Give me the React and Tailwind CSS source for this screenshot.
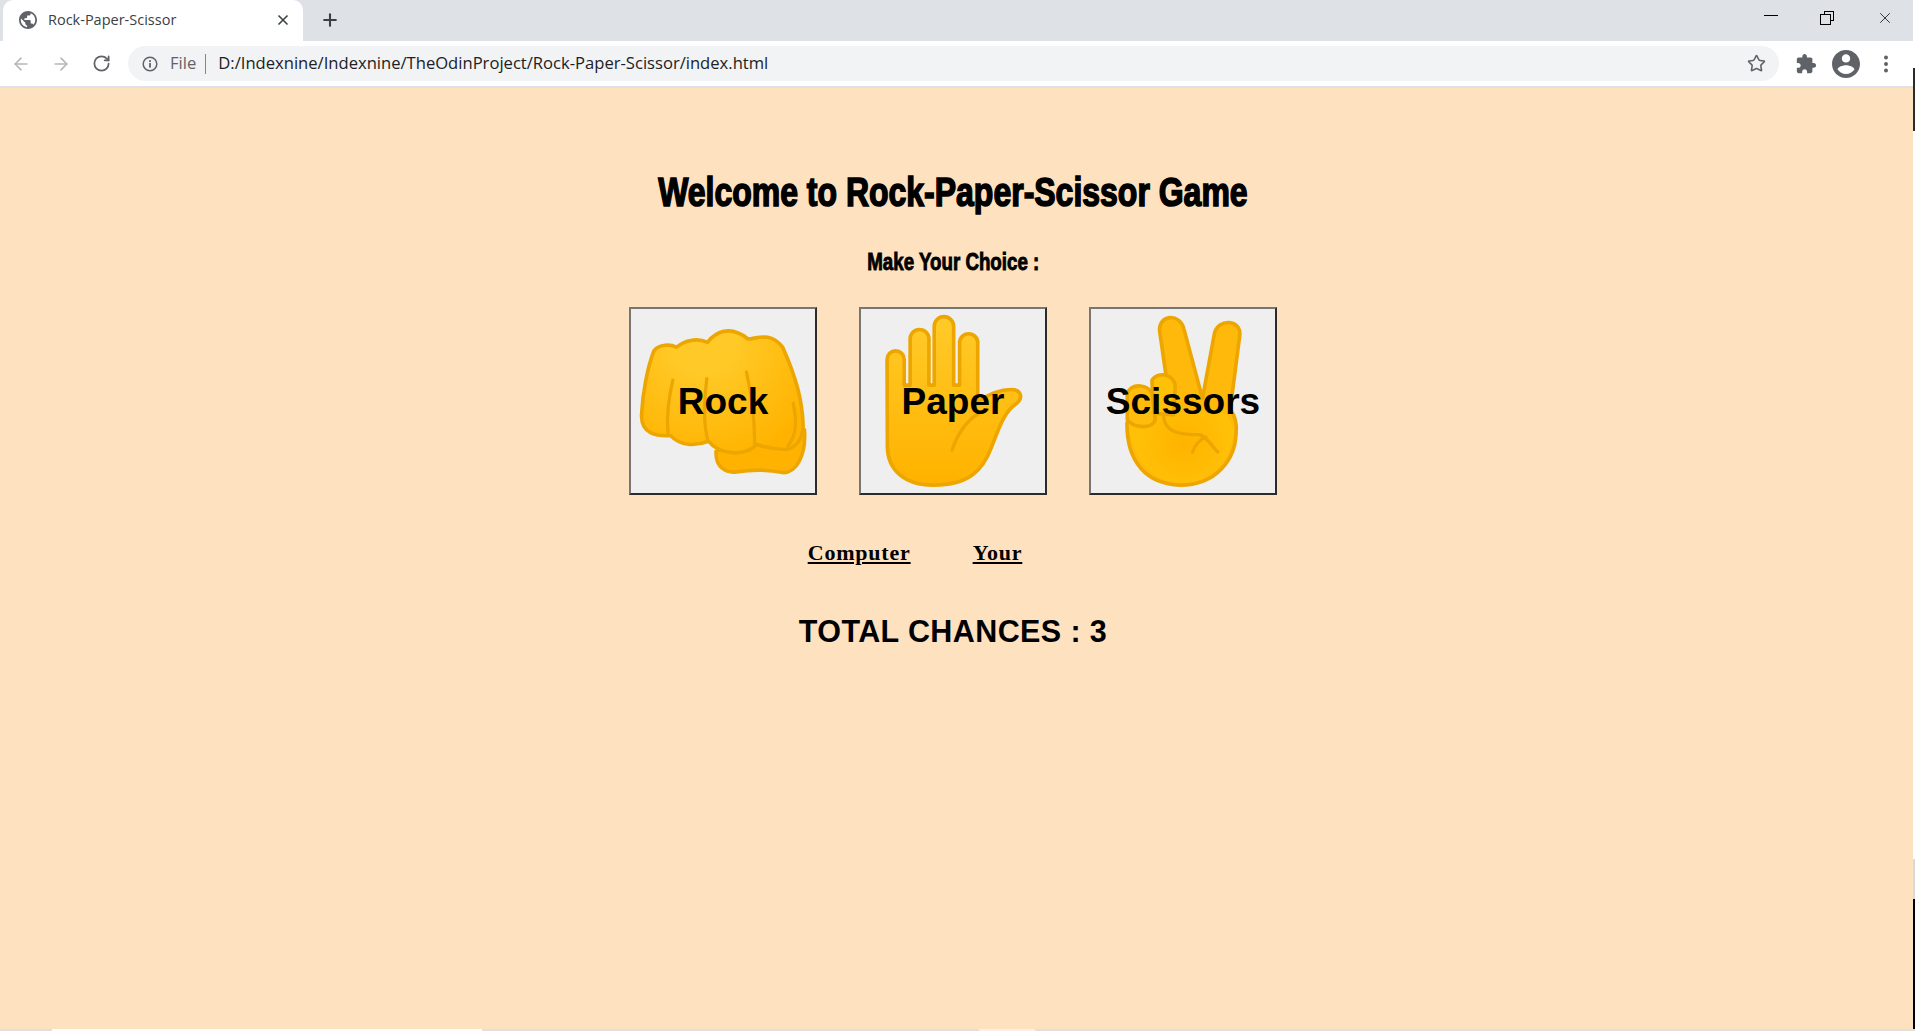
import React from "react";
import { ArrowLeft, ArrowRight, RotateCw, Star, Plus, X } from "lucide-react";

const Globe = () => (
  <svg viewBox="2 2 20 20" className="w-[18px] h-[18px] shrink-0" fill="#5f6368">
    <path d="M12 2C6.48 2 2 6.48 2 12s4.48 10 10 10 10-4.48 10-10S17.52 2 12 2zm-1 17.93c-3.95-.49-7-3.85-7-7.93 0-.62.08-1.21.21-1.79L9 15v1c0 1.1.9 2 2 2v1.93zm6.9-2.54c-.26-.81-1-1.39-1.9-1.39h-1v-3c0-.55-.45-1-1-1H8v-2h2c.55 0 1-.45 1-1V7h2c1.1 0 2-.9 2-2v-.41c2.93 1.19 5 4.06 5 7.41 0 2.08-.8 3.97-2.1 5.39z" />
  </svg>
);

const InfoIcon = () => (
  <svg viewBox="0 0 16 16" className="w-4 h-4 shrink-0" fill="none" stroke="#5f6368">
    <circle cx="8" cy="8" r="6.8" strokeWidth="1.5" />
    <rect x="7.1" y="7" width="1.8" height="4.6" fill="#5f6368" stroke="none" />
    <rect x="7.1" y="4.2" width="1.8" height="1.8" fill="#5f6368" stroke="none" />
  </svg>
);

const Puzzle = () => (
  <svg viewBox="0 0 24 24" className="w-[22px] h-[22px]" fill="#5f6368">
    <path d="M20.5 11H19V7c0-1.1-.9-2-2-2h-4V3.5C13 2.12 11.88 1 10.5 1S8 2.12 8 3.5V5H4c-1.1 0-1.99.9-1.99 2v3.8H3.5c1.49 0 2.7 1.21 2.7 2.7s-1.21 2.7-2.7 2.7H2V20c0 1.1.9 2 2 2h3.8v-1.5c0-1.49 1.21-2.7 2.7-2.7 1.49 0 2.7 1.21 2.7 2.7V22H17c1.1 0 2-.9 2-2v-4h1.5c1.38 0 2.5-1.12 2.5-2.5S21.88 11 20.5 11z" />
  </svg>
);

const Avatar = () => (
  <svg viewBox="2 2 20 20" className="w-7 h-7" fill="#5f6368">
    <path d="M12 2C6.48 2 2 6.48 2 12s4.48 10 10 10 10-4.48 10-10S17.52 2 12 2zm0 3c1.66 0 3 1.34 3 3s-1.34 3-3 3-3-1.34-3-3 1.34-3 3-3zm0 14.2c-2.5 0-4.71-1.28-6-3.22.03-1.99 4-3.08 6-3.08 1.99 0 5.97 1.09 6 3.08-1.29 1.94-3.5 3.22-6 3.22z" />
  </svg>
);

const Dots = () => (
  <svg viewBox="0 0 6 20" className="w-[6px] h-5" fill="#5f6368">
    <circle cx="3" cy="3.5" r="2" />
    <circle cx="3" cy="10" r="2" />
    <circle cx="3" cy="16.5" r="2" />
  </svg>
);

const Gradient = ({ id }) => (
  <defs>
    <radialGradient id={id} gradientUnits="userSpaceOnUse" cx="250" cy="120" r="440">
      <stop offset="0.2" stopColor="#ffca28" />
      <stop offset="0.85" stopColor="#ffb300" />
    </radialGradient>
  </defs>
);

const line = { fill: "none", stroke: "#eda600", strokeWidth: 10, strokeLinecap: "round", strokeLinejoin: "round" };
const outline = { stroke: "#eda600", strokeWidth: 11, strokeLinejoin: "round" };

const RockArt = () => (
  <svg viewBox="30 24 558 558" className="absolute inset-0 w-full h-full">
    <Gradient id="rockG" />
    <path d="M288,455 C285,505 320,522 350,518 C400,510 450,512 490,520 C530,522 562,470 556,390 L530,380 Z" fill="#ffb300" {...outline} />
    <path d="M100,150 C115,130 150,130 168,140 C190,120 230,110 262,125 C285,95 330,70 385,115 C410,115 450,90 490,140 C530,230 550,300 552,380 C550,420 530,445 500,450 C470,450 440,445 410,435 C380,470 300,470 265,425 C225,440 180,440 150,408 C110,410 60,405 62,345 C65,280 80,200 100,150 Z" fill="url(#rockG)" {...outline} />
    <path d="M157,240 C145,290 138,350 142,400" {...line} />
    <path d="M260,235 C252,300 250,370 262,420" {...line} />
    <path d="M380,215 C395,280 405,360 405,432" {...line} />
    <path d="M522,310 C532,360 535,405 505,440" {...line} />
  </svg>
);

const PaperArt = () => (
  <svg viewBox="30 24 558 558" className="absolute inset-0 w-full h-full">
    <defs>
      <linearGradient id="paperG" gradientUnits="userSpaceOnUse" x1="0" y1="60" x2="0" y2="540">
        <stop offset="0" stopColor="#ffca28" />
        <stop offset="1" stopColor="#ffb300" />
      </linearGradient>
    </defs>
    <path d="M109,177 A26,26 0 0 1 161,177 L161,255 L179,255 L179,114.5 A28.5,28.5 0 0 1 236,114.5 L236,255 L252,255 L252,76.5 A29.5,29.5 0 0 1 311,76.5 L311,255 L329,255 L329,126.5 A27.5,27.5 0 0 1 384,126.5 L384,305 C420,280 450,268 485,268 C518,268 522,296 500,312 C465,335 450,380 425,445 C400,510 360,558 250,558 C160,558 110,510 110,440 Z" fill="url(#paperG)" {...outline} />
    <path d="M306,452 C322,405 345,365 388,340" {...line} />
  </svg>
);

const ScissorsArt = () => (
  <svg viewBox="30 24 558 558" className="absolute inset-0 w-full h-full">
    <defs>
      <radialGradient id="sciG" gradientUnits="userSpaceOnUse" cx="310" cy="430" r="150">
        <stop offset="0" stopColor="#ffb300" />
        <stop offset="1" stopColor="#ffc107" />
      </radialGradient>
    </defs>
    <path d="M238,90 C235,40 300,35 312,85 L368,295 L404,100 C414,50 488,55 481,105 L452,330 C470,350 472,380 470,400 C468,480 410,558 300,558 C200,555 138,490 139,370 L210,300 L268,300 Z" fill="#ffb90a" {...outline} />
    <path d="M145,370 C150,470 215,550 300,552 C400,552 458,480 463,390 L440,340 L200,340 Z" fill="url(#sciG)" />
    <path d="M215,240 C235,208 290,225 285,265 L280,345 L218,340 Z" fill="#ffc107" {...outline} />
    <path d="M140,280 C155,245 205,255 215,280 L225,360 C215,390 160,385 140,360 Z" fill="#ffbc0d" {...outline} />
    <path d="M250,350 C255,395 290,405 360,405 C385,415 400,445 415,458" {...line} />
    <path d="M338,458 C345,435 360,420 378,412" {...line} />
  </svg>
);

const Choice = ({ label, art }) => (
  <button className="relative w-[188px] h-[188px] pt-[2px] bg-[#efefef] border-2 border-t-[#767676] border-l-[#767676] border-r-[#2b2b2b] border-b-[#2b2b2b]">
    {art}
    <span className="relative text-[37px] font-bold text-black font-['Liberation_Sans',sans-serif]">{label}</span>
  </button>
);

export default function App() {
  return (
    <div className="h-screen w-full overflow-hidden flex flex-col bg-[#fee2c0] font-['Roboto',sans-serif]">
      <div className="flex flex-1 min-h-0">
        <div className="flex flex-col flex-1 min-w-0">
          {/* tab strip */}
          <div className="h-[41px] shrink-0 bg-[#dee1e6] flex items-center pl-[3px] pr-[19px]">
            <div className="w-[300px] h-[41px] pb-[2px] bg-white rounded-t-[10px] flex items-center pl-4 pr-[12px]">
              <Globe />
              <span className="ml-[11px] flex-1 text-[14.5px] text-[#3c4043] font-['Open_Sans',sans-serif] whitespace-nowrap">Rock-Paper-Scissor</span>
              <X size={16} strokeWidth={2.5} color="#3c4043" />
            </div>
            <Plus size={20} strokeWidth={2.5} color="#3c4043" className="ml-[17px] mb-[2px]" />
            <div className="ml-auto flex items-center gap-[42px]">
              <div className="w-[14px] h-[1px] bg-black mb-[10px]" />
              <div className="relative w-[14px] h-[14px] mb-[6px]">
                <div className="absolute right-0 top-0 w-[10px] h-[10px] border border-black" />
                <div className="absolute left-0 bottom-0 w-[11px] h-[11px] border border-black bg-[#dee1e6]" />
              </div>
              <X size={18} strokeWidth={1} color="#000" className="mb-[5px]" />
            </div>
          </div>
          {/* toolbar */}
          <div className="h-[47px] shrink-0 bg-white border-b-2 border-[#dee1e6] flex items-center pl-[11px] pr-[24px]">
            <ArrowLeft size={20} strokeWidth={2} color="#b5b7ba" />
            <ArrowRight size={20} strokeWidth={2} color="#b5b7ba" className="ml-[20px]" />
            <RotateCw size={19} strokeWidth={2.2} color="#5f6368" className="ml-[21px]" />
            <div className="ml-[17px] flex-1 h-[35px] rounded-full bg-[#f1f3f4] flex items-center pl-[14px] pr-[13px]">
              <InfoIcon />
              <span className="ml-[12px] text-[16.6px] text-[#5f6368] font-['Open_Sans',sans-serif]">File</span>
              <div className="ml-[9px] w-[1px] h-[20px] bg-[#80868b]" />
              <span className="ml-[12px] flex-1 text-[16.6px] text-[#202124] font-['Open_Sans',sans-serif] whitespace-nowrap">D:/Indexnine/Indexnine/TheOdinProject/Rock-Paper-Scissor/index.html</span>
              <Star size={19} strokeWidth={2} color="#5f6368" />
            </div>
            <div className="ml-[16px]"><Puzzle /></div>
            <div className="ml-[15px]"><Avatar /></div>
            <div className="ml-[23px]"><Dots /></div>
          </div>
          {/* page */}
          <main className="flex-1 min-h-0 flex flex-col items-center pr-[7px] pt-[80px]">
            <h1 className="h-[48px] leading-[48px] text-[41px] font-bold text-black whitespace-nowrap scale-x-[0.78] font-['Liberation_Sans',sans-serif] [-webkit-text-stroke:1.6px_black]">Welcome to Rock-Paper-Scissor Game</h1>
            <h2 className="mt-[32px] h-[28px] leading-[28px] text-[24px] font-bold text-black whitespace-nowrap scale-x-[0.78] font-['Liberation_Sans',sans-serif] [-webkit-text-stroke:0.9px_black]">Make Your Choice :</h2>
            <div className="mt-[31px] flex gap-[42px]">
              <Choice label="Rock" art={<RockArt />} />
              <Choice label="Paper" art={<PaperArt />} />
              <Choice label="Scissors" art={<ScissorsArt />} />
            </div>
            <div className="mt-[44px] pr-[76px] flex gap-[62px] text-[22px] font-bold text-black underline tracking-[0.8px] leading-[28px] font-['Liberation_Serif',serif]">
              <span>Computer</span>
              <span>Your</span>
            </div>
            <div className="mt-[44px] text-[30.5px] font-bold text-black tracking-[0.4px] leading-[40px] whitespace-nowrap font-['Liberation_Sans',sans-serif]">TOTAL CHANCES : 3</div>
          </main>
        </div>
        {/* window edge */}
        <div className="w-[2px] shrink-0 flex flex-col bg-white">
          <div className="h-[68px]" />
          <div className="h-[63px] bg-[#2b2b2b]" />
          <div className="flex-1" />
          <div className="h-[40px] bg-[#d9d9d9]" />
          <div className="h-[130px] bg-black" />
        </div>
      </div>
      {/* bottom edge */}
      <div className="h-[2px] shrink-0 flex bg-[#e0e0e0]">
        <div className="ml-[52px] w-[430px] bg-white" />
        <div className="ml-[497px] w-[56px] bg-[#f5f0ea]" />
      </div>
    </div>
  );
}
